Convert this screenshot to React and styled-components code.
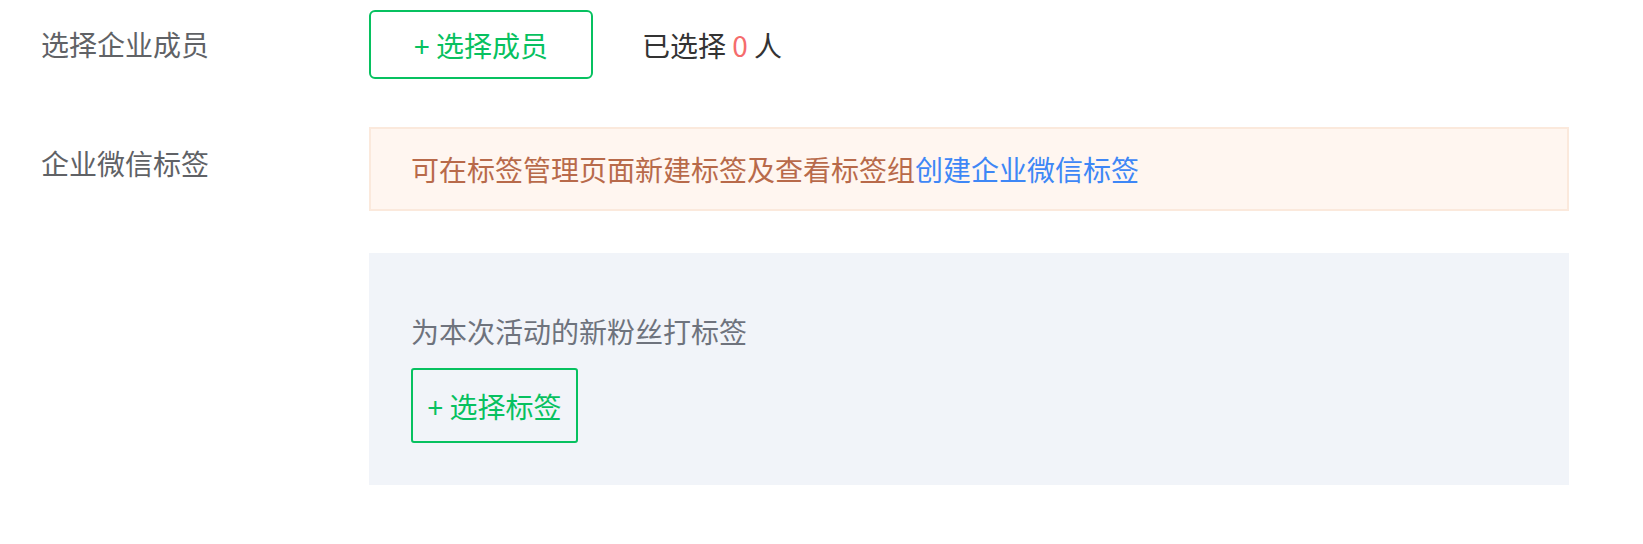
import React from "react";
import styled, { createGlobalStyle } from "styled-components";

const Global = createGlobalStyle`
  html, body { margin: 0; padding: 0; background: #fff; }
  body { font-family: "Noto Sans CJK SC", "Noto Sans", sans-serif; }
`;

const Form = styled.div`
  padding: 10px 0 0 41px;
  width: 1528px;
`;

const Item = styled.div`
  display: grid;
  grid-template-columns: 328px 1fr;
  margin-bottom: ${(p) => p.$mb || 0}px;
`;

const Label = styled.div`
  font-size: 28px;
  line-height: ${(p) => p.$lh || 69}px;
  color: #606266;
  margin-top: ${(p) => p.$mt || 0}px;
`;

const Content = styled.div`
  display: flex;
  flex-direction: ${(p) => (p.$column ? "column" : "row")};
  align-items: ${(p) => (p.$column ? "stretch" : "center")};
`;

const OutlineButton = styled.button`
  box-sizing: border-box;
  height: ${(p) => p.$h}px;
  width: ${(p) => p.$w}px;
  border: 2px solid #07c160;
  border-radius: ${(p) => p.$r}px;
  background: ${(p) => p.$bg || "#fff"};
  color: #07c160;
  font-family: "Noto Sans CJK SC", sans-serif;
  font-size: 28px;
  padding: 0;
  display: flex;
  align-items: center;
  justify-content: center;
  cursor: pointer;
`;

const Count = styled.span`
  margin-left: 49px;
  font-size: 28px;
  color: #333;
`;

const Red = styled.span`
  color: #f56c6c;
`;

const Notice = styled.div`
  box-sizing: border-box;
  height: 84px;
  border: 2px solid #fbe9dc;
  background: #fff6f0;
  padding-left: 40px;
  display: flex;
  align-items: center;
  font-size: 28px;
  color: #b86a4a;
`;

const Link = styled.a`
  color: #3e87f6;
  text-decoration: none;
  cursor: pointer;
`;

const Panel = styled.div`
  margin-top: 42px;
  box-sizing: border-box;
  height: 232px;
  background: #f1f4f9;
  padding: 58px 42px 42px;
  display: flex;
  flex-direction: column;
  align-items: flex-start;
`;

const PanelTitle = styled.div`
  font-size: 28px;
  line-height: 40px;
  color: #6e737d;
  margin-bottom: 17px;
`;

export default function App() {
  return (
    <>
      <Global />
      <Form>
        <Item $mb={48}>
          <Label>选择企业成员</Label>
          <Content>
            <OutlineButton $w={224} $h={69} $r={6}>
              + 选择成员
            </OutlineButton>
            <Count>
              已选择 <Red>0</Red> 人
            </Count>
          </Content>
        </Item>
        <Item>
          <Label $mt={2}>企业微信标签</Label>
          <Content $column>
            <Notice>
              可在标签管理页面新建标签及查看标签组<Link>创建企业微信标签</Link>
            </Notice>
            <Panel>
              <PanelTitle>为本次活动的新粉丝打标签</PanelTitle>
              <OutlineButton $w={167} $h={75} $r={3} $bg="transparent">
                + 选择标签
              </OutlineButton>
            </Panel>
          </Content>
        </Item>
      </Form>
    </>
  );
}
